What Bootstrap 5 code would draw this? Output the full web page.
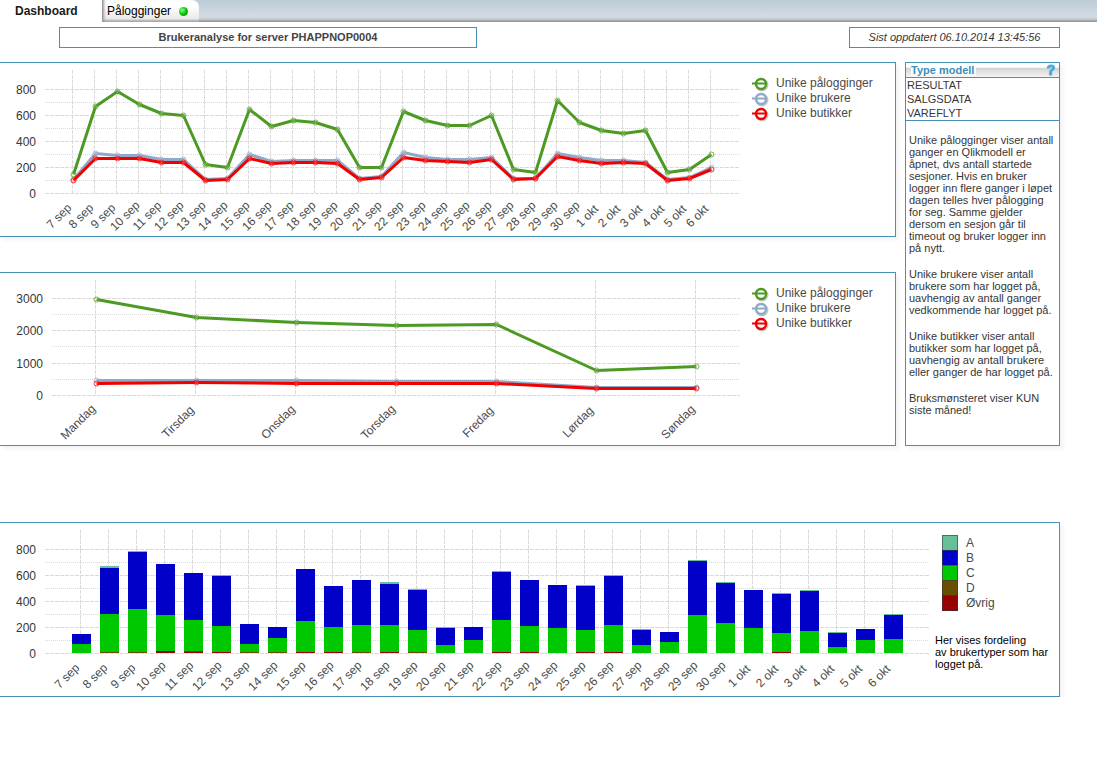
<!DOCTYPE html>
<html lang="no">
<head>
<meta charset="utf-8">
<meta name="viewport" content="width=device-width, initial-scale=1">
<title>Brukeranalyse</title>
<link href="https://cdn.jsdelivr.net/npm/bootstrap@5.3.0/dist/css/bootstrap.min.css" rel="stylesheet">
<style>
  body { font: 11px/12px "Liberation Sans", Arial, sans-serif; color: #363636; background: #fff; }
  a { color: inherit; text-decoration: none; }
  .tabbar { height: 22px; background: linear-gradient(#bccbd5, #d3dbe3 75%, #c3c9ce 88%, #999 96%); font-size: 12px; line-height: 22px; }
  .tab-on { width: 102px; padding-left: 15px; background: #fff; color: #1a1a1a; }
  .tab-off { width: 97px; padding-left: 4px; height: 22px; background: linear-gradient(#fff 30%, #e4e4e4); color: #000; border-left: 1px solid #999; border-radius: 0 7px 0 0; box-shadow: inset 3px 0 3px -2px #999, inset 0 -3px 2px -1px #aaa; }
  .led { width: 9px; height: 9px; border-radius: 50%; margin-left: 8px; background: radial-gradient(circle at 35% 35%, #8f8, #0b0 55%, #080); }
  .page { padding-right: 37px; }
  .boxed { border: 1px solid #4691b5; background: #fff; box-shadow: 3px 3px 4px rgba(0,0,0,.05); }
  .headline { height: 21px; font-size: 11px; line-height: 19px; text-align: center; box-shadow: none; }
  .headline-main { width: 418px; margin-left: 59px; color: #444; }
  .headline-date { width: 211px; }
  .bleed { border-left: 0; }
  .plot { min-width: 0; }
  .plot svg { display: block; width: 100%; }
  .plot text { font-size: 12px; fill: #363636; }
  .plot .tilt { fill: #4a4a4a; }
  .key-lines { width: 155px; padding: 13px 0 0 12px; }
  .key-bars { width: 130px; padding: 13px 0 0 6px; }
  .key-row { height: 15px; font-size: 12px; line-height: 15px; color: #4a4a4a; }
  .key-row svg { width: 18px; height: 16px; margin-right: 6px; overflow: visible; }
  .swatch { width: 16px; height: 16px; margin: -1px 8px 0 7px; border: 1px solid rgba(60,60,60,.6); }
  .bar-note { color: #000; margin-top: 23px; }
  .side { width: 155px; margin-left: 9px; }
  .side-title { height: 15px; line-height: 15px; padding: 0 4px 0 5px; border-bottom: 1px solid #4691b5; background: linear-gradient(#fff 30%, #d4d4d4 38%, #f4f4f4); color: #3a8fb9; }
  .side-title span { background: #fff; background: linear-gradient(#fff 60%, #f4f4f4); padding-right: 2px; }
  .side-title a { color: #4aa9dc; font-size: 14px; -webkit-text-stroke: 1px #4aa9dc; }
  .models li { height: 14px; line-height: 14px; padding-left: 1px; }
  .help-text { border-top: 0; padding: 13px 0 0 3px; }
  .help-text p { margin-bottom: 14px; }
  .row-top { margin: 5px 0 14px; }
  .stack-gap { gap: 35px; }
  .bars-panel { margin-top: 76px; }
</style>
</head>
<body>
<nav class="tabbar d-flex" aria-label="Faner">
  <a class="tab-on fw-bold" href="#dashboard" aria-current="page">Dashboard</a>
  <a class="tab-off d-flex align-items-center" href="#palogginger">Pålogginger<span class="led"></span></a>
</nav>

<main class="page" id="dashboard">
  <div class="row-top d-flex justify-content-between">
    <h1 class="boxed headline headline-main fw-bold mb-0">Brukeranalyse for server PHAPPNOP0004</h1>
    <div class="boxed headline headline-date fst-italic">Sist oppdatert 06.10.2014 13:45:56</div>
  </div>

  <div class="d-flex">
    <div class="d-flex flex-column flex-grow-1 stack-gap plot">
      <section class="boxed bleed d-flex">
        <div class="plot flex-grow-1" id="daily"></div>
        <div class="key-lines flex-shrink-0" data-line-key></div>
      </section>
      <section class="boxed bleed d-flex">
        <div class="plot flex-grow-1" id="weekly"></div>
        <div class="key-lines flex-shrink-0" data-line-key></div>
      </section>
    </div>
    <aside class="side flex-shrink-0 d-flex flex-column">
      <section class="boxed">
        <div class="side-title d-flex justify-content-between fw-bold"><span>Type modell</span><a href="#hjelp" aria-label="Hjelp">?</a></div>
        <ul class="models list-unstyled mb-0"><li>RESULTAT</li><li>SALGSDATA</li><li>VAREFLYT</li></ul>
      </section>
      <section class="boxed help-text flex-grow-1" id="hjelp">
        <p>Unike pålogginger viser antall<br>ganger en Qlikmodell er<br>åpnet, dvs antall startede<br>sesjoner. Hvis en bruker<br>logger inn flere ganger i løpet<br>dagen telles hver pålogging<br>for seg. Samme gjelder<br>dersom en sesjon går til<br>timeout og bruker logger inn<br>på nytt.</p>
        <p>Unike brukere viser antall<br>brukere som har logget på,<br>uavhengig av antall ganger<br>vedkommende har logget på.</p>
        <p>Unike butikker viser antall<br>butikker som har logget på,<br>uavhengig av antall brukere<br>eller ganger de har logget på.</p>
        <p class="mb-0">Bruksmønsteret viser KUN<br>siste måned!</p>
      </section>
    </aside>
  </div>

  <section class="boxed bleed bars-panel d-flex">
    <div class="plot flex-grow-1" id="types"></div>
    <div class="key-bars flex-shrink-0">
      <div id="barKey"></div>
      <p class="bar-note mb-0">Her vises fordeling<br>av brukertyper som har<br>logget på.</p>
    </div>
  </section>
</main>

<script src="https://cdn.jsdelivr.net/npm/bootstrap@5.3.0/dist/js/bootstrap.bundle.min.js"></script>
<script>
const days = [];
for (let d = 7; d <= 30; d++) days.push(d + ' sep');
for (let d = 1; d <= 6; d++) days.push(d + ' okt');

const lines = [
  { name: 'Unike pålogginger', color: '#4c9a23' },
  { name: 'Unike brukere', color: '#8ea9ca' },
  { name: 'Unike butikker', color: '#f00000' }
];
const daily = [
  [144,669,785,685,615,600,223,200,646,515,562,546,492,200,200,631,562,523,523,600,185,162,715,546,487,462,487,162,185,300],
  [105,310,292,292,264,264,105,115,302,249,256,256,256,113,128,315,277,264,264,277,115,118,308,277,254,256,241,105,120,200],
  [100,272,272,272,241,241,103,110,272,233,241,241,233,110,126,277,254,246,241,262,110,115,285,254,233,241,231,100,118,187]
];
const weekly = [
  [2960,2405,2250,2160,2190,770,895],
  [460,460,450,430,430,245,245],
  [370,400,370,370,370,215,215]
];
// Stack levels per day: top of A, B, C, D and Øvrig, in units of 200/26 logins
const levels = [
  [19,19,9,0,0],[87,85,39,1,0],[102,101,44,1,0],[89,89,38,2,2],[80,80,33,2,1],[78,77,27,1,1],[29,29,9,1,0],[26,26,15,1,0],
  [84,84,32,1,1],[67,67,26,1,1],[73,73,28,1,0],[71,69,28,1,1],[64,63,23,1,0],[26,25,8,0,0],[26,26,13,0,0],[82,81,33,1,1],
  [73,73,27,1,1],[68,68,25,0,0],[68,67,23,1,1],[78,77,28,1,1],[24,23,8,0,0],[21,21,11,0,0],[93,92,38,0,0],[71,70,30,0,0],
  [63,63,25,0,0],[60,59,20,1,1],[63,62,22,0,0],[21,20,6,0,0],[24,24,13,0,0],[39,38,14,0,0]
];
const kinds = [['A','#66c097'],['B','#0000c8'],['C','#00c800'],['D','#665000'],['Øvrig','#960000']];

function frame(o) {
  let s = '';
  const hline = (y, dash) => `<path d="M${o.left} ${y}H${o.w}" stroke="#dadada" stroke-dasharray="${dash}"/>`;
  o.ticks.forEach((t, i) => {
    const y = Math.round(o.zero - i * o.unit) + .5;
    s += hline(y, '4 1');
    if (i < o.ticks.length - 1) s += hline(Math.round(o.zero - (i + .5) * o.unit) + .5, '1 1');
    s += `<text x="${o.left - 9}" y="${y + 4}" text-anchor="end">${t}</text>`;
  });
  o.labels.forEach((t, i) => {
    const x = o.first + i * o.step;
    s += `<path d="M${x + .5} 7V${o.zero}" stroke="#dadada" stroke-dasharray="4 1"/>`;
    s += `<text class="tilt" text-anchor="middle" dy="4" transform="translate(${x - o.dx} ${o.zero + o.dy}) rotate(-45)">${t}</text>`;
  });
  return s;
}
function lineChart(id, o, data) {
  const el = document.getElementById(id);
  o.w = el.clientWidth;
  o.step = Math.floor((o.w - o.pad) / o.labels.length);
  let s = frame(o);
  [1, 2, 0].forEach(k => {
    const pts = data[k].map((v, i) => [o.first + i * o.step + 1.5, Math.round(o.zero - v / o.per * o.unit) + .5]);
    s += `<polyline points="${pts.join(' ')}" fill="none" stroke="${lines[k].color}" stroke-width="3" stroke-linejoin="round"/>`;
    pts.forEach(p => s += `<circle cx="${p[0]}" cy="${p[1]}" r="2.5" fill="#fff" fill-opacity=".15" stroke="${lines[k].color}" stroke-opacity=".75"/>`);
  });
  el.innerHTML = `<svg height="${o.h}" role="img" aria-label="${o.title}">${s}</svg>`;
}
function barChart(id, o) {
  const el = document.getElementById(id);
  o.w = el.clientWidth;
  o.step = Math.floor((o.w - o.pad) / o.labels.length);
  let s = frame(o);
  levels.forEach((l, i) => kinds.forEach((k, j) => {
    const h = l[j] - (l[j + 1] || 0);
    if (h > 0) s += `<rect x="${o.first - 8 + i * o.step}" y="${o.zero - l[j]}" width="${o.step - 9}" height="${h}" fill="${k[1]}"/>`;
  }));
  el.innerHTML = `<svg height="${o.h}" role="img" aria-label="${o.title}">${s}</svg>`;
}
function draw() {
  lineChart('daily', { title: 'Per dag', h: 173, left: 45, first: 72, pad: 80, zero: 130, unit: 26, per: 200, dx: 13, dy: 23, ticks: [0,200,400,600,800], labels: days }, daily);
  lineChart('weekly', { title: 'Per ukedag', h: 172, left: 52, first: 95, pad: 40, zero: 122, unit: 32.4, per: 1000, dx: 17, dy: 27, ticks: [0,1000,2000,3000], labels: ['Mandag','Tirsdag','Onsdag','Torsdag','Fredag','Lørdag','Søndag'] }, weekly);
  barChart('types', { title: 'Brukertyper', h: 173, left: 45, first: 80, pad: 80, zero: 130, unit: 26, dx: 13, dy: 23, ticks: [0,200,400,600,800], labels: days });
}
document.querySelectorAll('[data-line-key]').forEach(el => {
  el.innerHTML = lines.map(l => `<div class="key-row d-flex"><svg viewBox="0 0 18 16"><circle cx="10" cy="9" r="5" fill="none" stroke="#000" stroke-opacity=".22" stroke-width="3"/><circle cx="9" cy="8" r="5" fill="#fff" stroke="${l.color}" stroke-width="2.4"/><path d="M0 7.5H14" stroke="${l.color}" stroke-width="2"/></svg>${l.name}</div>`).join('');
});
document.getElementById('barKey').innerHTML = kinds.map(k => `<div class="key-row d-flex"><span class="swatch" style="background:${k[1]}"></span>${k[0]}</div>`).join('');
draw();
addEventListener('resize', draw);
</script>
</body>
</html>
